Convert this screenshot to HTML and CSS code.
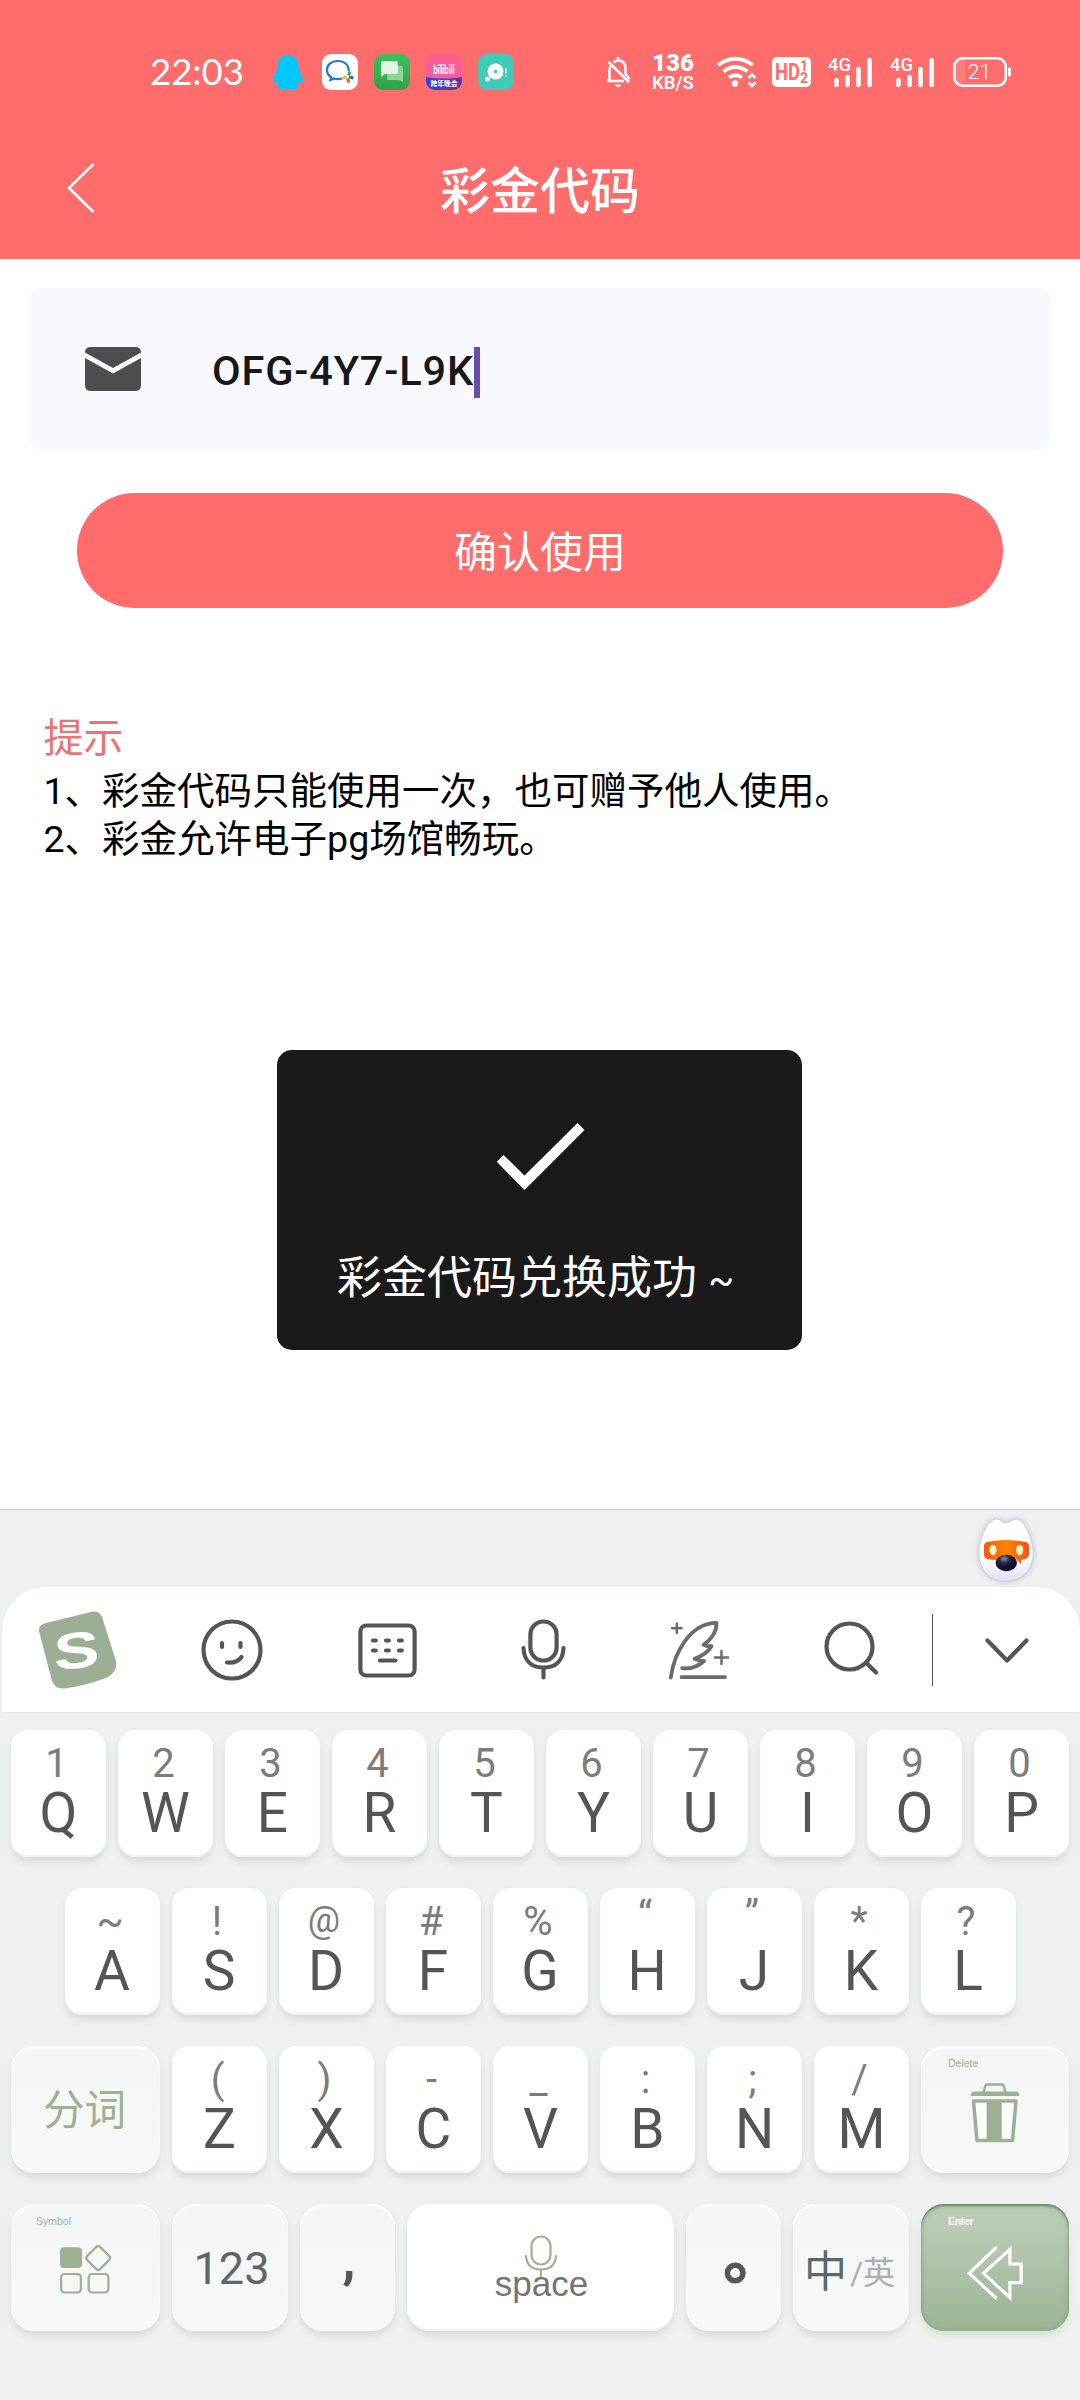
FILE: index.html
```html
<!DOCTYPE html>
<html lang="zh-CN">
<head>
<meta charset="utf-8">
<title>彩金代码</title>
<link rel="stylesheet" href="styles.css">
</head>
<body>
<div class="screen">
  <header class="header">
    <div class="status">
      <span class="clock">22:03</span>
      <div class="apps">
        <svg class="qq" width="32" height="36" viewBox="0 0 32 36"><path fill="#00c8ff" d="M16 1C8 1 5.500 7 5.500 13C5.500 17 1 21 1 27C1 30 3 28.500 4.500 27.500C5.500 30 7 31 6 33C5.500 35 7 35 9 35H23C25 35 26.500 35 26 33C25 31 26.500 30 27.500 27.500C29 28.500 31 30 31 27C31 21 26.500 17 26.500 13C26.500 7 24 1 16 1Z"/></svg>
        <svg width="36" height="36" viewBox="0 0 36 36"><rect width="36" height="36" rx="9" fill="#fff"/><path d="M26.500 17C27.500 11 22 7 16 7C9 7 5 11 5 16C5 19 6.500 21.500 9 23L8.500 26L12 24.500C15 25.500 18 25 20 24.500" fill="none" stroke="#1d78d2" stroke-width="2.200"/><path d="M26.500 21.500L28 17.500" stroke="#4cb034" stroke-width="3"/><path d="M27 23L31.500 24" stroke="#1d70d0" stroke-width="3"/><path d="M25.500 24.500L27 28.500" stroke="#f0582a" stroke-width="3"/><path d="M24.500 22.500L20.500 24.500" stroke="#fbb913" stroke-width="3"/></svg>
        <svg width="36" height="36" viewBox="0 0 36 36"><defs><linearGradient id="gmsg" x2="0" y2="1"><stop stop-color="#3fc05a"/><stop offset="1" stop-color="#2ea24a"/></linearGradient></defs><rect width="36" height="36" rx="9" fill="url(#gmsg)"/><path d="M14 12H27Q29 12 29 14V28L25 26H14Q13 26 13 25Z" fill="#8fd29b"/><path d="M9 7H22Q24 7 24 9V18Q24 20 22 20H11L7 23V9Q7 7 9 7Z" fill="#e4f5e6"/></svg>
        <svg width="36" height="36" viewBox="0 0 36 36"><defs><linearGradient id="gbili" x2="0" y2="1"><stop stop-color="#ff5a8c"/><stop offset="1" stop-color="#ef5fb0"/></linearGradient><linearGradient id="gbili2"><stop stop-color="#2c49d8"/><stop offset="1" stop-color="#6a2fa0"/></linearGradient><clipPath id="cb"><rect width="36" height="36" rx="9"/></clipPath></defs><g clip-path="url(#cb)"><rect width="36" height="36" fill="url(#gbili)"/><path d="M0 23Q18 26 36 23V36H0Z" fill="url(#gbili2)"/></g><text transform="translate(18 20) scale(.82 1.250)" class="bili">bilibili</text><text x="18" y="32" class="bilicn">跨年晚会</text></svg>
        <svg width="36" height="36" viewBox="0 0 36 36"><rect width="36" height="36" rx="9" fill="#3fcbb8"/><circle cx="17.500" cy="17.500" r="8" fill="#fff"/><circle cx="17.500" cy="17.500" r="1.800" fill="#3fcbb8"/><circle cx="9.500" cy="25" r="2.500" fill="#fff"/><path d="M28 14V20M28 21.500V23" stroke="#c9f3ec" stroke-width="1.500"/></svg>
      </div>
      <div class="sys">
        <svg class="bell" width="26" height="32" viewBox="0 0 26 32"><path d="M2 25H19M4.500 24V14Q4.500 12 6 9.500M8.500 6.500Q11 4.500 13 4.500Q20.500 4.500 20.500 13V18.500M13 1V4M3.500 6L24 26" fill="none" stroke="#fff" stroke-width="2.500"/><path d="M20.500 18L24.500 23" stroke="#fff" stroke-width="2.300"/><path d="M10 28.500H16Q15.500 31 13 31Q10.500 31 10 28.500Z" fill="#fff"/></svg>
        <div class="speed"><b>136</b><i>KB/S</i></div>
        <svg class="wifi" width="42" height="32" viewBox="0 0 42 32"><g fill="none" stroke="#fff" stroke-width="3.800"><path d="M2 9Q19.500-3.500 37 9"/><path d="M7.500 15.500Q19.500 6.500 31.500 15.500"/><path d="M13 21.500Q19.500 17 26 21.500"/></g><circle cx="19" cy="27.500" r="3.200" fill="#fff"/><path d="M32.500 22L36 18.500L39.500 22M32.500 26.500L36 30L39.500 26.500" fill="none" stroke="#fff" stroke-width="2.600"/></svg>
        <svg class="hd" width="39" height="30" viewBox="0 0 39 30"><rect width="39" height="30" rx="5" fill="#fff"/><text x="3" y="23" class="hdt" textLength="25" lengthAdjust="spacingAndGlyphs">HD</text><text x="28" y="14" class="hds">1</text><text x="28" y="25.500" class="hds">2</text></svg>
        <svg class="sig" width="46" height="32" viewBox="0 0 46 32"><text x="0" y="15" class="g4" textLength="23" lengthAdjust="spacingAndGlyphs">4G</text><path d="M8.500 24V29M19.500 21V29M30.500 13V29M41.500 4V29" stroke="#fff" stroke-width="4.500" stroke-linecap="round"/></svg>
        <svg class="sig" width="46" height="32" viewBox="0 0 46 32"><text x="0" y="15" class="g4" textLength="23" lengthAdjust="spacingAndGlyphs">4G</text><path d="M8.500 24V29M19.500 21V29M30.500 13V29M41.500 4V29" stroke="#fff" stroke-width="4.500" stroke-linecap="round"/></svg>
        <svg class="bat" width="60" height="32" viewBox="0 0 60 32"><path d="M3 9Q3 3 9 3H13V29H9Q3 29 3 23Z" fill="#ff7c7a"/><rect x="2.300" y="2.300" width="51.500" height="27.400" rx="8.500" fill="none" stroke="#fff" stroke-width="2.600"/><path d="M57.500 13V19" stroke="#fff" stroke-width="3" stroke-linecap="round"/><text x="27.500" y="23" class="batt">21</text></svg>
      </div>
    </div>
    <div class="nav">
      <svg class="back" width="30" height="52" viewBox="0 0 30 52"><path d="M27.500 2L3 26L27.500 50" fill="none" stroke="#fff" stroke-width="2.600"/></svg>
      <h1>彩金代码</h1>
      <span></span>
    </div>
  </header>

  <main class="content">
    <div class="field">
      <svg width="56" height="44" viewBox="0 0 56 44"><path fill="#4d4d4d" d="M6 0H50Q56 0 56 5.500L28 21L0 5.500Q0 0 6 0ZM0 11L28 26.500L56 11V38Q56 44 50 44H6Q0 44 0 38Z"/></svg>
      <span class="code">OFG-4Y7-L9K</span><span class="caret"></span>
    </div>
    <button class="confirm">确认使用</button>
    <section class="tips">
      <h2>提示</h2>
      <p>1、彩金代码只能使用一次，也可赠予他人使用。</p>
      <p>2、彩金允许电子pg场馆畅玩。</p>
    </section>
    <div class="toast">
      <svg width="90" height="70" viewBox="0 0 90 70"><path fill="#fff" d="M1.800 41.700L8.600 35L29.500 55.500L82.500 3L89.500 10L29.500 70Z"/></svg>
      <p>彩金代码兑换成功 <span class="tilde">~</span></p>
    </div>
  </main>

  <section class="ime">
    <div class="strip">
      <svg class="dog" width="56" height="64" viewBox="0 0 56 64"><defs><linearGradient id="gd" x2="0" y2="1"><stop offset=".6" stop-color="#fff"/><stop offset="1" stop-color="#dde1ee"/></linearGradient><linearGradient id="gv"><stop stop-color="#f4581c"/><stop offset=".5" stop-color="#ff8400"/><stop offset="1" stop-color="#f4521c"/></linearGradient><radialGradient id="gn" cx=".4" cy=".25"><stop stop-color="#8e92b8"/><stop offset=".5" stop-color="#252846"/><stop offset="1" stop-color="#0e1030"/></radialGradient></defs><path d="M18 1Q22 1 24.500 4Q28 5.500 31.500 4Q35 1 39 1Q46 3 51 16Q56 28 55 38Q52 62 28 63.500Q4 62 1 38Q0 28 5 16Q10 3 18 1Z" fill="url(#gd)" stroke="#c9cde0" stroke-width=".8"/><path d="M9 24Q28 20 48 24Q51 25 51 28V36Q51 40 47 41L43 42V46L38 41Q28 40 19 42Q14 42 9 41Q6 40 6 36V28Q6 25 9 24Z" fill="url(#gv)"/><ellipse cx="15" cy="32" rx="3.500" ry="5.200" fill="#fff3cc"/><ellipse cx="41.700" cy="32" rx="3.500" ry="5.200" fill="#fff3cc"/><ellipse cx="28.300" cy="45" rx="10.700" ry="8.300" fill="url(#gn)"/></svg>
    </div>
    <div class="toolbar">
      <div class="tools">
        <svg class="tool" viewBox="0 0 80 80"><path fill="#9cae94" d="M8 13L53 2Q61 0 64 7L78 51Q80 61 70 67Q48 76 26 78.500Q17 79 14 71L1 21Q0 15 8 13Z"/><text class="slogo" transform="translate(39 58) rotate(-6) skewX(-4) scale(1.350 1)">S</text></svg>
        <svg class="tool line" viewBox="0 0 80 80"><circle cx="39" cy="40" r="28.500"/><path d="M29 33V37M47.500 33V37M34 52.500Q44 53.500 48.500 47"/></svg>
        <svg class="tool line" viewBox="0 0 80 80"><rect x="12.400" y="15.500" width="54.200" height="50" rx="6"/><path d="M25 30.500H27.800M38 30.500H40.800M51 30.500H53.800M25 40.500H27.800M38 40.500H40.800M51 40.500H53.800M32 50.500H47.500"/></svg>
        <svg class="tool line" viewBox="0 0 80 80"><rect x="27.400" y="11.500" width="26.200" height="39" rx="13.100"/><path d="M20.500 38C21 51 29 57.500 40.500 57.500S60 51 60.500 38M40.500 58V67.500"/></svg>
        <svg class="tool line feather" viewBox="0 0 80 80"><path d="M12.800 67.500C16 43 32 13 58.500 12.800Q59 25 45.500 34.800Q49 36.500 53.500 36.200Q49 44 36.500 48.800Q41 51 46 51Q37 59.500 24.200 58.200M23.500 67.200H67"/><path class="thin" d="M18.800 13.500V23M14 18.200H23.500M63.500 41V54M57 47.500H70"/></svg>
        <svg class="tool line" viewBox="0 0 80 80"><circle cx="36.500" cy="36.500" r="23"/><path d="M53.500 53L63 62.500"/></svg>
      </div>
      <div class="divider"></div>
      <div class="fold"><svg class="tool line" viewBox="0 0 80 80"><path d="M20.500 30.500L40 50.500L59.500 30.500"/></svg></div>
    </div>
    <div class="keys">
      <div class="row">
        <div class="key"><i>1</i><b>Q</b></div><div class="key"><i>2</i><b>W</b></div><div class="key"><i>3</i><b>E</b></div><div class="key"><i>4</i><b>R</b></div><div class="key"><i>5</i><b>T</b></div><div class="key"><i>6</i><b>Y</b></div><div class="key"><i>7</i><b>U</b></div><div class="key"><i>8</i><b>I</b></div><div class="key"><i>9</i><b>O</b></div><div class="key"><i>0</i><b>P</b></div>
      </div>
      <div class="row">
        <div class="key"><i>~</i><b>A</b></div><div class="key"><i>!</i><b>S</b></div><div class="key"><i class="at">@</i><b>D</b></div><div class="key"><i>#</i><b>F</b></div><div class="key"><i>%</i><b>G</b></div><div class="key"><i class="quote">“</i><b>H</b></div><div class="key"><i class="quote">”</i><b>J</b></div><div class="key"><i>*</i><b>K</b></div><div class="key"><i>?</i><b>L</b></div>
      </div>
      <div class="row">
        <div class="key fn wide split">分词</div>
        <div class="key"><i>(</i><b>Z</b></div><div class="key"><i>)</i><b>X</b></div><div class="key"><i>-</i><b>C</b></div><div class="key"><i>_</i><b>V</b></div><div class="key"><i>:</i><b>B</b></div><div class="key"><i>;</i><b>N</b></div><div class="key"><i>/</i><b>M</b></div>
        <div class="key fn wide end"><small>Delete</small>
          <svg class="trash" width="50" height="60" viewBox="0 0 50 60"><path fill="none" stroke="#9cb092" stroke-width="2.500" d="M13.500 10L15 3.500Q15.500 1.500 17.500 1.500H31.500Q33.500 1.500 34 3.500L35.500 10"/><path fill="#9cb092" d="M4 8.500H46Q49 8.500 49.500 13H.5Q1 8.500 4 8.500Z"/><path fill="#fff" stroke="#9cb092" stroke-width="3.500" stroke-linejoin="round" d="M3.500 18H46L42.500 57.500H7Z"/><path fill="#9cb092" d="M16.600 18H31.700V57H16.600Z"/></svg>
        </div>
      </div>
      <div class="row">
        <div class="key fn wide"><small>Symbol</small>
          <svg class="sym" width="54" height="50" viewBox="0 0 54 50"><rect x="1" y="2.300" width="22" height="20.700" rx="4" fill="#9cb092"/><g fill="none" stroke="#9cb092" stroke-width="2.200"><rect x="30" y="3.800" width="18.400" height="18.400" rx="3" transform="rotate(45 39.200 13)"/><rect x="2.100" y="29" width="19.800" height="18.500" rx="3.500"/><rect x="29.600" y="29" width="19.800" height="18.500" rx="3.500"/></g></svg>
        </div>
        <div class="key fn num">123</div>
        <div class="key fn comma">,</div>
        <div class="key space">
          <svg width="34" height="42" viewBox="0 0 34 42"><g fill="none" stroke="#9cb092" stroke-width="2.200" stroke-linecap="round"><rect x="7.500" y="1.500" width="19" height="28" rx="9.500"/><path d="M2 21Q3 34.500 17 34.500T32 21M17 35V41"/></g></svg>
          <span>space</span>
        </div>
        <div class="key fn stop">。</div>
        <div class="key fn lang"><span>中</span><em>/英</em></div>
        <div class="key wide end enter"><small>Enter</small>
          <svg width="56" height="54" viewBox="0 0 56 54"><g fill="none" stroke="#fff" stroke-width="3.200" stroke-linecap="round"><path d="M28.700 2L2.200 27.300L28.700 51.700"/><path d="M16.500 27.300L42.900 3.300V18H54.200V36.700H42.900V51.700Z"/></g></svg>
        </div>
      </div>
    </div>
  </section>
</div>
</body>
</html>
```
FILE: styles.css
```css
* { box-sizing: border-box; margin: 0; padding: 0; }
body { width: 1080px; background: #fff; font-family: Roboto, "Noto Sans CJK SC", sans-serif; }
svg { display: block; flex: none; overflow: visible; }
.screen { width: 1080px; height: 2400px; display: flex; flex-direction: column; overflow: hidden; }

.header { height: 259px; background: #ff6c6c; color: #fff; }
.status { height: 121px; padding: 23px 68px 0 150px; display: flex; align-items: center; }
.clock { font: 36.500px/44px Lato, Roboto, sans-serif; width: 122px; margin-top: -2px; }
.apps { display: flex; gap: 16px; }
.qq { margin-right: 2px; }
.sys { margin-left: auto; display: flex; align-items: center; }
.speed { width: 44px; margin: 0 21px 0 20px; display: flex; flex-direction: column; align-items: center; font-weight: 700; }
.speed b { font-size: 24px; line-height: 22px; }
.speed i { font-style: normal; font-size: 18.500px; line-height: 18px; font-weight: 600; }
.wifi { margin-right: 14px; }
.hd { margin-right: 17px; }
.sig { margin-right: 16px; }
.bili { font: 700 10px Lato, sans-serif; fill: #fff; text-anchor: middle; }
.bilicn { font: 700 6.800px "Noto Sans CJK SC", sans-serif; fill: #fff; text-anchor: middle; }
.hdt { font: 700 23px Roboto, sans-serif; fill: #ff6c6c; }
.hds { font: 700 14px Roboto, sans-serif; fill: #ff6c6c; }
.g4 { font: 500 19px Roboto, sans-serif; fill: #fff; }
.batt { font: 300 21px Roboto, sans-serif; fill: #fff; text-anchor: middle; }
.nav { height: 138px; display: grid; grid-template-columns: 1fr auto 1fr; align-items: center; }
.back { margin: -5px 0 0 66px; }
h1 { font-size: 50px; line-height: 60px; font-weight: 500; padding-top: 4px; }

.content { height: 1250px; display: flex; flex-direction: column; }
.field { margin: 29px 29px 0; height: 162px; padding: 0 56px; border-radius: 14px; background: #f8f9ff; display: flex; align-items: center; }
.code { margin-left: 71px; font-size: 41.500px; letter-spacing: .85px; font-weight: 500; line-height: 50px; color: #17181a; padding-top: 4px; }
.caret { width: 6px; height: 51px; background: #674fa3; margin-top: 7px; }
.confirm { margin: 43px 77px 0; height: 115px; padding-top: 4px; border: 0; border-radius: 58px; background: #ff6c6c; color: #fff; font: 43px/60px Roboto, "Noto Sans CJK SC", sans-serif; }
.tips { margin: 102px 0 0 43.500px; color: #000; }
.tips h2 { font-size: 40px; line-height: 57px; font-weight: 400; color: #ea7373; }
.tips p { font-size: 37.500px; line-height: 48px; }
.toast { margin: 187px 0 0 277px; width: 525px; height: 300px; border-radius: 15px; background: #1a1a1a; color: #fff; padding: 70px 60px 0; }
.toast svg { margin-left: 158px; }
.toast p { margin-top: 59px; font-size: 45px; line-height: 60px; white-space: nowrap; }
.tilde { font-size: 38px; }

.ime { flex: 1; background: #eff1f0; border-top: 1px solid #ccc; }
.strip { height: 77px; padding: 8px 46px 0; display: flex; justify-content: flex-end; }
.dog { filter: drop-shadow(0 0 3px #b8bfd0); }
.toolbar { height: 125px; margin-left: 2px; border-radius: 44px 44px 0 0; background: #fff; display: flex; align-items: center; box-shadow: 0 1px 3px #e3e5e4; }
.tools { width: 930px; margin-left: -2px; display: grid; grid-template-columns: repeat(6, 1fr); justify-items: center; }
.tool { width: 80px; height: 80px; }
.line { fill: none; stroke: #555; stroke-width: 4.200px; stroke-linecap: round; stroke-linejoin: round; }
.feather { stroke: #6c6c6c; stroke-width: 3.800px; }
.thin { stroke-width: 2.500px; }
.slogo { font: 700 51px "Liberation Sans", sans-serif; fill: #fff; text-anchor: middle; }
.divider { width: 1px; height: 72px; margin-left: 2px; background: #555; }
.fold { flex: 1; display: flex; justify-content: center; }

.keys { padding: 18px 11px 0; display: flex; flex-direction: column; gap: 31px; }
.row { display: flex; justify-content: center; gap: 12px; }
.key { position: relative; flex: none; width: 95px; height: 127px; border-radius: 17px; background: #fff; box-shadow: 0 5px 7px #d9dbda, inset 0 -2px 1px #f0f2f1; display: flex; flex-direction: column; align-items: center; padding-top: 14px; }
.key i { font-style: normal; font-size: 40px; line-height: 40px; color: #7c7c7c; margin-left: -4px; }
.key b { font-weight: 400; font-size: 55px; line-height: 58px; color: #555; }
.key .at { font-size: 36px; margin-top: -2px; margin-bottom: 2px; }
.key .quote { margin-top: -6px; margin-bottom: 6px; }
.key small { position: absolute; left: 25px; top: 10px; font: 10.500px/14px "Liberation Sans", sans-serif; color: #9cb092; }
.fn { border-radius: 23px; background: linear-gradient(#f4f6f5, #f8f8f8); box-shadow: 0 5px 7px #d9dbda, inset 0 2px 2px #fff; justify-content: center; padding-top: 0; color: #5a686c; }
.wide { width: 149px; }
.end { width: 148px; }
.key.end small { left: 27px; }
.split { font-size: 41.500px; line-height: 60px; color: #9cb092; padding: 2px 2px 0 0; }
.trash { margin-top: 7px; }
.sym { margin-top: 5px; }
.num { width: 116px; font-size: 45px; padding: 2px 0 0 3px; }
.comma { font-size: 54px; font-weight: 700; line-height: 60px; color: #555; padding: 0 0 18px 3px; }
.space { width: 267px; padding-top: 31px; border-radius: 23px; }
.space span { font: 35px/40px "Liberation Sans", sans-serif; color: #747474; margin: -13px 0 0 2px; }
.stop { font: 700 62px/60px "Noto Sans CJK TC", sans-serif; color: #555; padding: 4px 0 0 3px; -webkit-text-stroke: 1px #555; }
.lang { width: 116px; flex-direction: row; align-items: center; font-size: 43px; padding-right: 3px; }
.lang em { font-style: normal; font-size: 32px; color: #a9afb0; margin-left: 3px; padding-top: 4px; }
.enter { border-radius: 23px; justify-content: center; padding-top: 10px; background: linear-gradient(#b9cab5 20%, #9cb496); box-shadow: 0 5px 7px #d5e2d3, inset 0 2px 2px #71896c, inset 0 0 6px #8aa684; }
.enter small { color: #fff; font-weight: 700; letter-spacing: -.3px; }
```
